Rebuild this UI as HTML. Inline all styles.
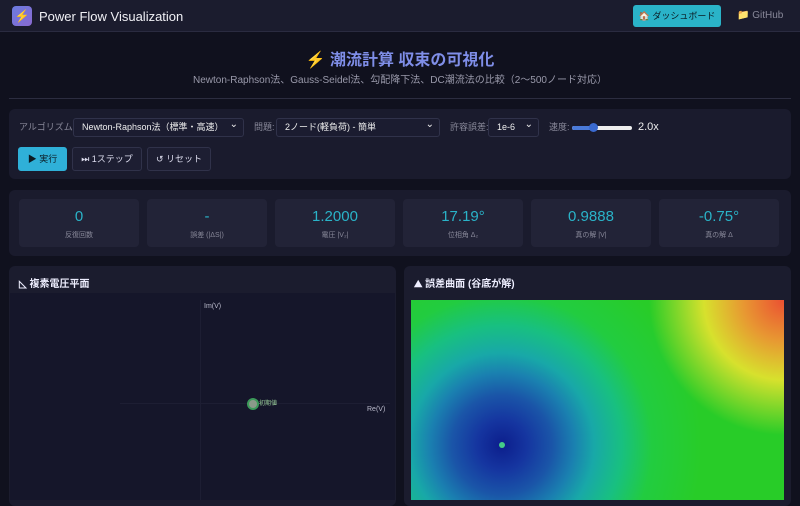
<!DOCTYPE html>
<html><head><meta charset="utf-8"><style>
*{box-sizing:border-box;margin:0;padding:0}
body{width:800px;height:500px;overflow:hidden;background:#10111e;font-family:"Liberation Sans","Noto Sans CJK JP",sans-serif;color:#ccd;position:relative}
.hdr{position:absolute;left:0;top:0;width:800px;height:32px;background:#1b1c2e;border-bottom:1px solid #2a2b40}
.logo{position:absolute;left:12px;top:6px;width:20px;height:20px;border-radius:4px;background:linear-gradient(135deg,#6a7be0,#8a6ad0);color:#fc3;font-size:12px;text-align:center;line-height:20px}
.ttl{position:absolute;left:39px;top:9px;font-size:13px;color:#f0f0f5}
.dash{position:absolute;left:633px;top:5px;width:88px;height:22px;background:#2ab3c8;border-radius:3px;color:#0b1a22;font-size:9px;line-height:22px;text-align:center;white-space:nowrap;overflow:hidden}
.gh{position:absolute;left:737px;top:10px;font-size:10px;color:#889}
h1{position:absolute;top:51px;width:800px;text-align:center;font-size:16px;line-height:20px;color:#7f8ee8;font-weight:bold}
.sub{position:absolute;top:75px;width:800px;text-align:center;font-size:10px;line-height:12px;color:#99a}
.hr{position:absolute;left:9px;top:98px;width:782px;height:1px;background:#2c2d40}
.panel{position:absolute;background:#1a1b2d;border-radius:6px}
.lbl{position:absolute;font-size:9px;line-height:11px;color:#889}
.sel{position:absolute;height:19px;background:#1b1c30;border:1px solid #30324a;border-radius:3px;font-size:9px;color:#eee;line-height:17px;padding-left:8px}
.sel:after{content:"⌄";position:absolute;right:5px;top:-3px;font-size:10px}
.btn{position:absolute;top:147px;height:24px;border:1px solid #30324a;border-radius:3px;background:#1d1e32;font-size:9px;color:#dde;line-height:22px;text-align:center}
.card{position:absolute;top:199px;width:120px;height:48px;background:#222337;border-radius:4px;text-align:center}
.card b{display:block;font-weight:normal;font-size:15px;color:#2ab3c8;margin-top:9px}
.card i{display:block;font-style:normal;font-size:7px;color:#889;margin-top:5px}
.ph{position:absolute;font-size:10px;font-weight:bold;color:#eef}
</style></head><body>
<div class="hdr"><div class="logo">⚡</div><div class="ttl">Power Flow Visualization</div>
<div class="dash">🏠 ダッシュボード</div><div class="gh">📁 GitHub</div></div>
<h1>⚡ 潮流計算 収束の可視化</h1>
<div class="sub">Newton-Raphson法、Gauss-Seidel法、勾配降下法、DC潮流法の比較（2〜500ノード対応）</div>
<div class="hr"></div>
<div class="panel" style="left:9px;top:109px;width:782px;height:70px"></div>
<div class="lbl" style="left:19px;top:122px">アルゴリズム:</div>
<div class="sel" style="left:73px;top:118px;width:171px">Newton-Raphson法（標準・高速）</div>
<div class="lbl" style="left:254px;top:122px">問題:</div>
<div class="sel" style="left:276px;top:118px;width:164px">2ノード(軽負荷) - 簡単</div>
<div class="lbl" style="left:450px;top:122px">許容誤差:</div>
<div class="sel" style="left:488px;top:118px;width:51px">1e-6</div>
<div class="lbl" style="left:549px;top:122px">速度:</div>
<div style="position:absolute;left:572px;top:126px;width:60px;height:4px;border-radius:2px;background:#eee"></div>
<div style="position:absolute;left:572px;top:126px;width:22px;height:4px;border-radius:2px;background:#4a7ad8"></div>
<div style="position:absolute;left:589px;top:123px;width:9px;height:9px;border-radius:50%;background:#3a6ad0"></div>
<div style="position:absolute;left:638px;top:121px;font-size:11px;color:#eee">2.0x</div>
<div class="btn" style="left:18px;width:49px;background:#2fb0d8;border-color:#2fb0d8;color:#0b1a22">▶ 実行</div>
<div class="btn" style="left:72px;width:70px">⏭ 1ステップ</div>
<div class="btn" style="left:147px;width:64px">↺ リセット</div>
<div class="panel" style="left:9px;top:190px;width:782px;height:66px"></div>
<div class="card" style="left:19px"><b>0</b><i>反復回数</i></div>
<div class="card" style="left:147px"><b>-</b><i>誤差 (|ΔS|)</i></div>
<div class="card" style="left:275px"><b>1.2000</b><i>電圧 |V₂|</i></div>
<div class="card" style="left:403px"><b>17.19°</b><i>位相角 Δ₂</i></div>
<div class="card" style="left:531px"><b>0.9888</b><i>真の解 |V|</i></div>
<div class="card" style="left:659px"><b>-0.75°</b><i>真の解 Δ</i></div>
<div class="panel" style="left:9px;top:266px;width:387px;height:240px;background:#1b1c2e"></div>
<div class="ph" style="left:19px;top:275px">◺ 複素電圧平面</div>
<div style="position:absolute;left:10px;top:293px;width:385px;height:207px;background:#15162a"></div>
<div style="position:absolute;left:200px;top:300px;width:1px;height:200px;background:#1d1e33"></div>
<div style="position:absolute;left:120px;top:403px;width:270px;height:1px;background:#1d1e33"></div>
<div style="position:absolute;left:204px;top:303px;font-size:7px;color:#bbc">Im(V)</div>
<div style="position:absolute;left:367px;top:406px;font-size:7px;color:#bbc">Re(V)</div>
<div style="position:absolute;left:247px;top:398px;width:12px;height:12px;border-radius:50%;background:#8a9a8a;border:2px solid #3c9a5a"></div>
<div style="position:absolute;left:259px;top:398px;font-size:6px;color:#9c9">初期値</div>
<div class="panel" style="left:404px;top:266px;width:387px;height:240px;background:#1b1c2e"></div>
<div class="ph" style="left:414px;top:275px">⛰ 誤差曲面 (谷底が解)</div>
<div style="position:absolute;left:411px;top:300px;width:373px;height:200px;background:radial-gradient(circle at 91px 145px,#0c1e8c 0,#1535a0 25px,#1a55a8 50px,#1a80b0 72px,#18a8a8 92px,#18c080 120px,#22cc40 150px,#28cc28 200px,#28cc28 400px)"></div>
<div style="position:absolute;left:411px;top:300px;width:373px;height:200px;background:radial-gradient(circle at 373px 0,rgba(235,80,50,1) 0,rgba(232,150,50,1) 40px,rgba(215,225,45,1) 80px,rgba(120,210,40,0) 135px)"></div>
<div style="position:absolute;left:499px;top:442px;width:6px;height:6px;border-radius:50%;background:#4c8"></div>
</body></html>
